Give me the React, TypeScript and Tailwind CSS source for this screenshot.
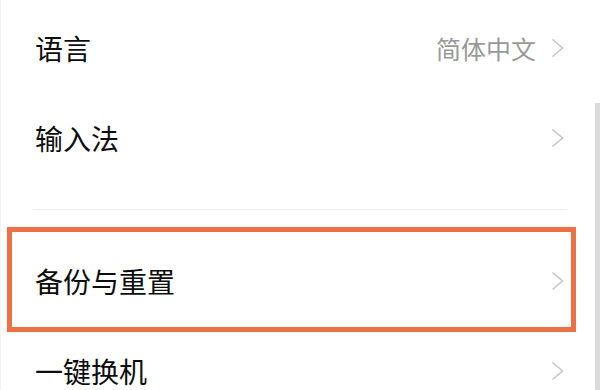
import { Fragment } from 'react'

type Item = { label: string; value?: string; highlight?: boolean }

const groups: Item[][] = [
  [{ label: '语言', value: '简体中文' }, { label: '输入法' }],
  [{ label: '备份与重置', highlight: true }, { label: '一键换机' }],
]

function Chevron() {
  return (
    <svg width="13" height="20" viewBox="0 0 13 20" fill="none" className="shrink-0">
      <polyline points="1.5,1.5 11.5,10 1.5,18.5" stroke="#c6c6c6" strokeWidth="1.6" strokeLinejoin="miter" />
    </svg>
  )
}

function Row({ item }: { item: Item }) {
  return (
    <div className="relative flex h-[90px] items-center justify-between pl-[35px] pr-[36px]">
      <span className="text-[28px] leading-none text-[#0d0d0d]">{item.label}</span>
      <div className="flex items-center gap-[15px]">
        {item.value && <span className="text-[25px] leading-none text-[#999]">{item.value}</span>}
        <Chevron />
      </div>
      {/* annotation box drawn over the row */}
      {item.highlight && (
        <div className="pointer-events-none absolute left-[7px] right-[24px] top-[-9px] bottom-[-6px] border-[5px] border-[#ec6f45]" />
      )}
    </div>
  )
}

export default function App() {
  return (
    <div
      className="relative h-[390px] w-[600px] overflow-hidden bg-white"
      style={{ fontFamily: '"Noto Sans CJK SC", "Noto Sans", sans-serif' }}
    >
      <div className="pt-[3px]">
        {groups.map((group, gi) => (
          <Fragment key={gi}>
            {gi > 0 && (
              <div className="py-[26px] pl-[33px] pr-[33px]">
                <div className="h-px bg-[#f0f0f0]" />
              </div>
            )}
            {group.map((item) => (
              <Row key={item.label} item={item} />
            ))}
          </Fragment>
        ))}
      </div>

      {/* scrollbar */}
      <div className="absolute right-0 top-[103px] bottom-0 w-[5px] bg-[#dadada]" />
      <div className="absolute left-0 top-0 bottom-0 w-px bg-[#f3f3f3]" />
    </div>
  )
}
